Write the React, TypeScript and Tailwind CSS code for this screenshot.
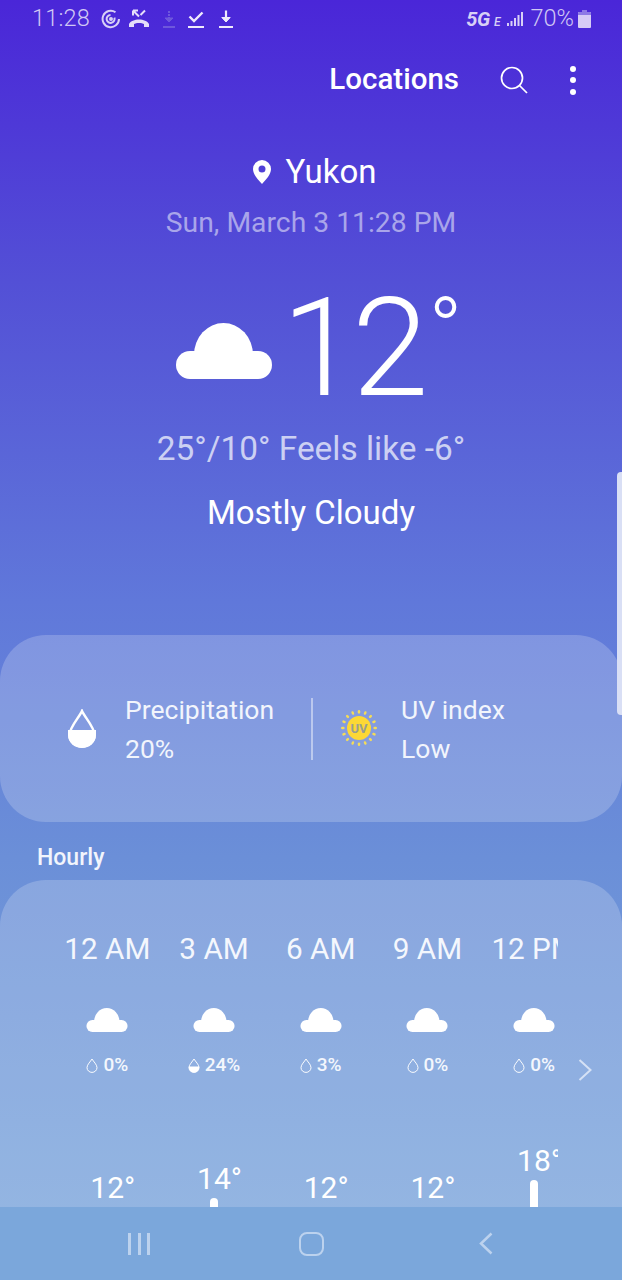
const Cloud = ({ className }: { className: string }) => (
  <svg viewBox="0 0 96 56" className={className} fill="#fff">
    <rect x="0" y="28" width="96" height="28" rx="14" />
    <path d="M18 32a29.5 32 0 0 1 59 0z" />
  </svg>
);

const SmallDrop = ({ fill }: { fill: boolean }) => (
  <svg viewBox="0 0 12 15" className="w-[12px] h-[15px]" fill="none">
    <path d="M6 1 C7.5 3.6 11 6.6 11 9.6 A5 4.8 0 0 1 1 9.6 C1 6.6 4.5 3.6 6 1z" stroke="#fff" strokeWidth="1" strokeOpacity={0.95} />
    {fill && <path d="M.8 8.5 H11.2 V9.6 A5.2 5 0 0 1 .8 9.6z" fill="#fff" />}
  </svg>
);

const hours = [
  { h: "12 AM", p: "0%", t: "12", bar: 70, fill: false },
  { h: "3 AM", p: "24%", t: "14", bar: 79, fill: true },
  { h: "6 AM", p: "3%", t: "12", bar: 70, fill: false },
  { h: "9 AM", p: "0%", t: "12", bar: 70, fill: false },
  { h: "12 PM", p: "0%", t: "18", bar: 97, fill: false },
];

function UvIcon() {
  const rays = Array.from({ length: 16 }, (_, i) => (i * 360) / 16);
  return (
    <svg viewBox="0 0 38 38" className="w-[38px] h-[38px] -mt-[3px]">
      {rays.map((a) => (
        <rect key={a} x="17.8" y="1" width="2.4" height="3.6" rx="1.2" fill="#f4dc58" transform={`rotate(${a} 19 19)`} />
      ))}
      <circle cx="19" cy="19" r="12" fill="#fdd835" />
      <text x="19" y="23.7" textAnchor="middle" fontSize="13" fontWeight="700" fill="#9a9f8f" fontFamily="Roboto, sans-serif">UV</text>
    </svg>
  );
}

export default function App() {
  return (
    <div className="relative w-[622px] h-[1280px] overflow-hidden flex flex-col font-['Roboto',sans-serif] text-white bg-[linear-gradient(180deg,#4a26d8_0%,#5350d6_22%,#6078da_47%,#6b8fd8_67%,#7ba7db_100%)]">
      {/* status bar */}
      <div className="h-[38px] shrink-0 flex items-center pl-[32px] pr-[31px] text-[#c9bdf2]">
        <span className="text-[23.5px] leading-none font-light tracking-[0.2px] text-[#d0c7f4]">11:28</span>
        <svg viewBox="0 0 20 20" className="w-[20px] h-[20px] ml-[11px]" fill="none" stroke="#d8d0f6" strokeWidth="2">
          <path d="M14.5 3.2A8.2 8.2 0 1 0 18 10" />
          <path d="M13.4 8.6A4 4 0 1 1 9.5 5.9" />
          <circle cx="10" cy="10" r="1" fill="#d8d0f6" />
        </svg>
        <svg viewBox="0 0 20 20" className="w-[20px] h-[20px] ml-[8px]" fill="none" stroke="#e4def9">
          <path d="M4 1.500 L10 7.500 M4 1.500 h5 M4 1.500 v5 M16 1.500 L11.500 6" strokeWidth="2" />
          <path d="M0 18 v-3 C3 9 17 9 20 15 v3 h-5 v-3 c-2-1.500-8-1.500-10 0 v3z" fill="#e4def9" strokeWidth="0" />
        </svg>
        <svg viewBox="0 0 14 20" className="w-[14px] h-[20px] ml-[13px]" fill="none" stroke="#6e58dc" strokeWidth="2">
          <path d="M7 2v9" strokeDasharray="2 1" />
          <path d="M3 9l4 4 4-4z" fill="#6e58dc" strokeWidth="1" />
          <path d="M1 18h12" />
        </svg>
        <svg viewBox="0 0 18 20" className="w-[18px] h-[20px] ml-[11px]" fill="none" stroke="#efeafc" strokeWidth="2.4">
          <path d="M2.5 7.5l4.5 4.5 8.5-8.5" />
          <path d="M1 18h16" strokeWidth="2" />
        </svg>
        <svg viewBox="0 0 14 20" className="w-[14px] h-[20px] ml-[14px]" fill="none" stroke="#efeafc" strokeWidth="2">
          <path d="M7 1.5v9" strokeWidth="2.2" />
          <path d="M2.8 8.5L7 13l4.2-4.5z" fill="#efeafc" strokeWidth="1" />
          <path d="M0 18h14" />
        </svg>
        <div className="ml-auto flex items-center">
          <span className="text-[20px] leading-none font-bold italic text-[#d8d0f6] tracking-[-0.3px]">5G</span>
          <span className="text-[12px] leading-none font-medium italic text-[#d8d0f6] mt-[6px] ml-[4px]">E</span>
          <svg viewBox="0 0 17 16" className="w-[17px] h-[16px] ml-[6px]" fill="#d8d0f6">
            <rect x="0" y="12" width="2" height="3" />
            <rect x="3.5" y="10" width="2" height="5" />
            <rect x="7" y="7" width="2" height="8" />
            <rect x="10.5" y="4" width="2" height="11" />
            <rect x="14" y="1" width="2" height="14" />
          </svg>
          <span className="text-[23.5px] leading-none font-light ml-[7px] text-[#d0c7f4]">70%</span>
          <svg viewBox="0 0 13 18" className="w-[13px] h-[18px] ml-[4px]">
            <path d="M4 0h5v2h3a1 1 0 0 1 1 1v14a1 1 0 0 1-1 1H1a1 1 0 0 1-1-1V3a1 1 0 0 1 1-1h3z" fill="#d6ccf6" />
            <path d="M4 0h5v2h3a1 1 0 0 1 1 1v2H0V3a1 1 0 0 1 1-1h3z" fill="#8d7ae6" />
          </svg>
        </div>
      </div>

      {/* action bar */}
      <div className="h-[84px] shrink-0 flex items-center justify-end pr-[46px]">
        <span className="text-[29.5px] font-medium leading-none mr-[41px]">Locations</span>
        <svg viewBox="0 0 28 28" className="w-[28px] h-[28px] mr-[42px]" fill="none" stroke="#fff" strokeWidth="1.7">
          <circle cx="12" cy="12" r="10.5" />
          <path d="M19.5 19.5L27 27" />
        </svg>
        <div className="flex flex-col gap-[5.5px]">
          <span className="w-[6px] h-[6px] rounded-full bg-white" />
          <span className="w-[6px] h-[6px] rounded-full bg-white" />
          <span className="w-[6px] h-[6px] rounded-full bg-white" />
        </div>
      </div>

      {/* main */}
      <div className="flex-1 min-h-0 overflow-hidden flex flex-col items-center">
        <div className="h-[34px] mt-[33px] ml-[8px] flex items-center gap-[14px] text-[33px] leading-none">
          <svg viewBox="0 0 18 24" className="w-[18px] h-[24px]">
            <path fillRule="evenodd" d="M9 0a9 9 0 0 1 9 9c0 5.5-5 10.5-9 15-4-4.500-9-9.500-9-15a9 9 0 0 1 9-9zm0 5.500a3.500 3.500 0 1 0 0 7 3.500 3.500 0 0 0 0-7z" fill="#fff" />
          </svg>
          <span>Yukon</span>
        </div>
        <div className="mt-[19px] text-[28.3px] leading-[32px] text-[#a9a5ea]">Sun, March 3 11:28 PM</div>
        <div className="mt-[34px] ml-[17px] h-[150px] flex items-center">
          <Cloud className="w-[96px] h-[56px] mt-[6px] mr-[9px]" />
          <span className="text-[138px] leading-[150px] font-light tracking-[-6px]">12</span>
          <span className="self-start text-[90px] leading-[90px] font-light ml-[6px] mt-[14px]">°</span>
        </div>
        <div className="mt-[8px] text-[33.4px] leading-[36px] text-[#ccd0f3]">25°/10° Feels like -6°</div>
        <div className="mt-[27px] text-[33px] leading-[38px]">Mostly Cloudy</div>

        <div className="mt-[103px] w-full h-[187px] shrink-0 rounded-[46px] bg-white/20 flex items-center">
          <div className="w-[311px] flex items-center pl-[68px] pt-[1px]">
            <svg viewBox="0 0 28 39" className="w-[28px] h-[39px] -mt-[1px]" fill="none">
              <path d="M14 2 C16.500 8 26.500 18 26.500 26 A12.500 11.500 0 0 1 1.500 26 C1.500 18 11.500 8 14 2z" stroke="#fff" strokeWidth="2.500" />
              <path d="M0 21 H28 V26 A14 13 0 0 1 0 26z" fill="#fff" />
            </svg>
            <div className="ml-[29px] text-[26.5px] leading-[39px] text-[#f2f5fc]">
              <div>Precipitation</div>
              <div>20%</div>
            </div>
          </div>
          <div className="w-[2px] h-[62px] bg-white/45" />
          <div className="flex items-center pl-[27px] pt-[1px]">
            <UvIcon />
            <div className="ml-[23px] text-[26.5px] leading-[39px] text-[#f2f5fc]">
              <div>UV index</div>
              <div>Low</div>
            </div>
          </div>
        </div>

        <div className="w-full pl-[37px] mt-[23px] text-[23px] leading-[26px] font-medium text-[#f2f5fc]">Hourly</div>

        <div className="relative mt-[9px] w-full h-[400px] shrink-0 rounded-t-[46px] bg-white/20 pt-[51px] pl-[54px]">
          <div className="w-[504px] overflow-hidden flex">
            {hours.map((c) => (
              <div key={c.h} className="w-[106.7px] shrink-0 flex flex-col items-center">
                <div className="text-[29.7px] leading-[36px] whitespace-nowrap text-[#f4f7fd]">{c.h}</div>
                <Cloud className="w-[42px] h-[24px] mt-[41px]" />
                <div className="mt-[21px] h-[24px] flex items-center gap-[5px] text-[19px] font-medium text-[#f4f7fd]">
                  <SmallDrop fill={c.fill} />
                  <span>{c.p}</span>
                </div>
                <div className="h-[200px] flex flex-col items-center justify-end">
                  <div className="text-[30px] leading-[36px] pl-[11px]">{c.t}°</div>
                  <div className="mt-[1px] w-[8px] rounded-t-full bg-white" style={{ height: c.bar }} />
                </div>
              </div>
            ))}
          </div>
          <svg viewBox="0 0 14 24" className="absolute left-[578px] top-[178px] w-[14px] h-[24px]" fill="none" stroke="#d5e1f5" strokeWidth="2">
            <path d="M1.500 2l11 10-11 10" />
          </svg>
        </div>
      </div>

      {/* navigation bar */}
      <div className="h-[73px] shrink-0 bg-[#7ba7db] flex items-center relative">
        <div className="w-[207px] flex justify-center gap-[6.5px] pl-[71px]">
          <span className="w-[3px] h-[22px] bg-[#bcd2ee]" />
          <span className="w-[3px] h-[22px] bg-[#bcd2ee]" />
          <span className="w-[3px] h-[22px] bg-[#bcd2ee]" />
        </div>
        <div className="w-[208px] flex justify-center">
          <span className="w-[25px] h-[24px] rounded-[8px] border-[2.500px] border-[#bcd2ee]" />
        </div>
        <div className="w-[207px] flex justify-center pr-[65px]">
          <svg viewBox="0 0 14 23" className="w-[14px] h-[23px]" fill="none" stroke="#bcd2ee" strokeWidth="2.500">
            <path d="M12.500 1.500L2 11.500l10.500 10" />
          </svg>
        </div>
      </div>

      {/* scroll indicator */}
      <div className="absolute right-0 top-[472px] w-[5px] h-[243px] rounded-l-[4px] bg-[#d9dff5]" />
    </div>
  );
}
